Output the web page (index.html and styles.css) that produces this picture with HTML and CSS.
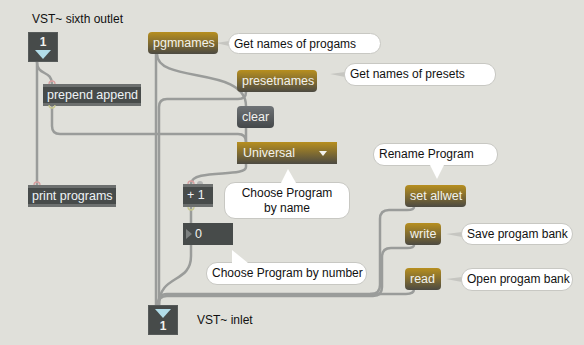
FILE: index.html
```html
<!DOCTYPE html>
<html lang="en">
  <head>
    <meta charset="UTF-8" />
    <title>VST~ program patch</title>
    <link rel="stylesheet" href="styles.css">
  </head>
  <body>
    <div id="patcher">
      <svg class="cords" width="584" height="345" viewBox="0 0 584 345">
        <g class="cord">
          <path d="M37 62 V185" />
          <path d="M37 62 C37 76, 52 70, 52 84" />
          <path d="M52 105 V126 Q52 134 60 134 H238 Q246 134 246 142" />
          <path d="M156 54 V305" />
          <path d="M157 54 C157 84, 246 66, 246 106" />
          <path d="M246 92 Q246 99 238 99 H167 Q159 99 159 107 V305" />
          <path d="M246 128 V142" />
          <path d="M246 164 V167 C246 178, 191 168, 191 184" />
          <path d="M191 207 V223" />
          <path d="M191 245 V256 C191 284, 159 274, 159 305" />
          <path d="M414 207 Q414 210 407 210 H389 Q380 210 380 219 V285 Q380 294 371 294 H167 Q158 294 158 305" />
          <path d="M414 245 Q414 248 407 248 H391 Q382 248 382 257 V287 Q382 296 373 296 H167 Q158 296 158 305" />
          <path d="M414 289 Q414 294 406 294 H370" />
        </g>
        <g class="tails">
          <polygon points="216,43 229,41 229,46" />
          <polygon points="330,74 345,72 345,77" />
          <polygon points="446,234 462,232 462,237" />
          <polygon points="446,279 462,277 462,282" />
        </g>
      </svg>

      <div class="label n-sixth">VST~ sixth outlet</div>
      <div class="port-box n-in">
        <span class="port-num">1</span>
        <span class="tri"></span>
      </div>

      <div class="obj n-prepend">prepend append</div>
      <div class="obj n-print">print programs</div>
      <div class="obj n-plus">+ 1</div>
      <div class="numbox n-num"><span class="num-tri"></span>0</div>

      <div class="msg n-pgm">pgmnames</div>
      <div class="msg n-preset">presetnames</div>
      <div class="msg grey n-clear">clear</div>
      <div class="menu n-menu">Universal<span class="menu-arrow"></span></div>
      <div class="msg n-allwet">set allwet</div>
      <div class="msg n-write">write</div>
      <div class="msg n-read">read</div>

      <div class="bubble n-c1">Get names of progams</div>
      <div class="bubble n-c2">Get names of presets</div>
      <div class="bubble center up n-c3">Choose Program<br>by name</div>
      <div class="bubble up-left n-c4">Choose Program by number</div>
      <div class="bubble down n-c5">Rename Program</div>
      <div class="bubble n-c6">Save progam bank</div>
      <div class="bubble n-c7">Open progam bank</div>

      <div class="port-box n-out">
        <span class="tri"></span>
        <span class="port-num">1</span>
      </div>
      <div class="label n-inlet">VST~ inlet</div>

      <svg class="ports" width="584" height="345" viewBox="0 0 584 345">
        <g class="inlet">
          <path d="M49 84 A3 3 0 0 1 55 84" />
          <path d="M34 185 A3 3 0 0 1 40 185" />
          <path d="M188 184 A3 3 0 0 1 194 184" />
        </g>
        <path class="inlet-off" d="M197 184 A3 3 0 0 1 203 184 Z" />
        <g class="outlet">
          <path d="M49 105 A3 3 0 0 0 55 105" />
          <path d="M188 207 A3 3 0 0 0 194 207" />
        </g>
      </svg>
    </div>
  </body>
</html>
```

FILE: styles.css
```css
body {
  margin: 0;
  background: #e0e0da;
  font-family: "Liberation Sans", Arial, sans-serif;
  font-size: 12px;
}
#patcher {
  position: relative;
  width: 584px;
  height: 345px;
  overflow: hidden;
}
.cords,
.ports {
  position: absolute;
  left: 0;
  top: 0;
}
.ports {
  z-index: 2;
}
.cord path {
  fill: none;
  stroke: #9a9c9a;
  stroke-width: 2.5;
}
.tails polygon {
  fill: #c6c6c1;
}
.inlet path {
  fill: none;
  stroke: #d8a0a0;
  stroke-width: 1.3;
}
.inlet-off {
  fill: #b4b6b5;
}
.outlet path {
  fill: none;
  stroke: #c8c890;
  stroke-width: 1.3;
}

/* nodes */
.label,
.obj,
.msg,
.menu,
.numbox,
.bubble,
.port-box {
  position: absolute;
  box-sizing: border-box;
  white-space: nowrap;
}
.label {
  color: #111;
  line-height: 14px;
}
.obj {
  height: 22px;
  line-height: 16px;
  padding: 0 4px;
  background: #474b4a;
  border-top: 3px solid #6d706f;
  border-bottom: 3px solid #6d706f;
  color: #eef3f6;
  font-size: 12.5px;
}
.msg {
  height: 22px;
  line-height: 22px;
  padding: 0 5px;
  border-radius: 4px;
  background: linear-gradient(#b78f1f, #4c4a42);
  color: #f2f2ee;
  font-size: 12.5px;
}
.msg.grey {
  background: linear-gradient(#6f7376, #44484a);
}
.menu {
  height: 22px;
  line-height: 22px;
  padding: 0 6px;
  background: linear-gradient(#b78f1f, #4c4a42);
  color: #f2f2ee;
  font-size: 12.5px;
}
.menu-arrow {
  position: absolute;
  right: 10px;
  top: 9px;
  border-left: 4px solid transparent;
  border-right: 4px solid transparent;
  border-top: 5px solid #f2f2ee;
}
.numbox {
  height: 22px;
  line-height: 22px;
  padding-left: 12px;
  background: #474b4a;
  color: #f2f2ee;
  font-size: 12.5px;
}
.num-tri {
  position: absolute;
  left: 3px;
  top: 6px;
  border-top: 5px solid transparent;
  border-bottom: 5px solid transparent;
  border-left: 6px solid #7d8180;
}
.bubble {
  background: #fff;
  border: 1px solid #c8c8c3;
  border-radius: 11px;
  color: #111;
  padding: 0 5px;
  line-height: 20px;
}
.bubble.center {
  text-align: center;
  line-height: 15px;
  padding-top: 3px;
}
.bubble.up::before,
.bubble.up-left::before,
.bubble.down::before {
  content: "";
  position: absolute;
  width: 0;
  height: 0;
}
.bubble.up::before {
  left: 56px;
  top: -14px;
  border-left: 7px solid transparent;
  border-right: 8px solid transparent;
  border-bottom: 14px solid #fff;
}
.bubble.up-left::before {
  left: 25px;
  top: -13px;
  border-right: 16px solid transparent;
  border-bottom: 13px solid #fff;
}
.bubble.down::before {
  left: 56px;
  bottom: -14px;
  border-left: 7px solid transparent;
  border-right: 7px solid transparent;
  border-top: 14px solid #fff;
}
.port-box {
  width: 30px;
  height: 30px;
  background: #474b4a;
  border: 1px solid #575b5a;
  display: flex;
  flex-direction: column;
  align-items: center;
  justify-content: center;
  gap: 2px;
}
.port-num {
  color: #f2f2ee;
  font-weight: bold;
  font-size: 12px;
  line-height: 12px;
}
.tri {
  border-left: 8px solid transparent;
  border-right: 8px solid transparent;
  border-top: 9px solid #b2dde9;
}

/* positions on the canvas */
.n-sixth { left: 32px; top: 12px; }
.n-in { left: 28px; top: 32px; }
.n-prepend { left: 43px; top: 84px; width: 98px; }
.n-print { left: 28px; top: 185px; width: 88px; }
.n-plus { left: 183px; top: 184px; width: 30px; height: 23px; }
.n-num { left: 183px; top: 223px; width: 50px; }
.n-pgm { left: 148px; top: 32px; width: 70px; }
.n-preset { left: 237px; top: 70px; width: 80px; }
.n-clear { left: 237px; top: 106px; width: 37px; }
.n-menu { left: 237px; top: 142px; width: 100px; }
.n-allwet { left: 405px; top: 185px; width: 61px; }
.n-write { left: 405px; top: 223px; width: 36px; }
.n-read { left: 405px; top: 268px; width: 36px; }
.n-c1 { left: 228px; top: 33px; width: 153px; height: 21px; }
.n-c2 { left: 344px; top: 63px; width: 152px; height: 23px; }
.n-c3 { left: 224px; top: 182px; width: 126px; height: 37px; }
.n-c4 { left: 206px; top: 262px; width: 161px; height: 23px; }
.n-c5 { left: 373px; top: 143px; width: 125px; height: 23px; }
.n-c6 { left: 461px; top: 223px; width: 112px; height: 22px; }
.n-c7 { left: 461px; top: 268px; width: 112px; height: 23px; }
.n-out { left: 148px; top: 305px; }
.n-inlet { left: 197px; top: 313px; }
```
